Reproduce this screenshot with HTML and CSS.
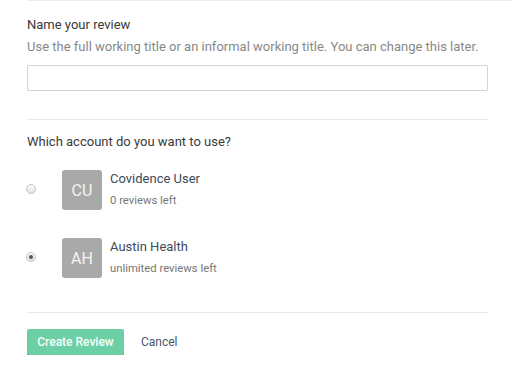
FILE: index.html
```html
<!DOCTYPE html>
<html>
<head>
    <link rel="stylesheet" href="styles.css">
</head>
<body>
    <div class="top-rule"></div>

    <div class="form">
        <div class="field">
            <label class="field-label" for="review-name">Name your review</label>
            <p class="field-help">Use the full working title or an informal working title. You can change this later.</p>
            <input id="review-name" class="text-input" type="text">
        </div>

        <div class="accounts">
            <p class="field-label">Which account do you want to use?</p>

            <div class="account">
                <span class="radio"></span>
                <div class="avatar">CU</div>
                <div class="account-info">
                    <div class="account-name">Covidence User</div>
                    <div class="account-meta">0 reviews left</div>
                </div>
            </div>

            <div class="account">
                <span class="radio checked"></span>
                <div class="avatar">AH</div>
                <div class="account-info">
                    <div class="account-name">Austin Health</div>
                    <div class="account-meta">unlimited reviews left</div>
                </div>
            </div>
        </div>

        <div class="actions">
            <button class="btn-create">Create Review</button>
            <a href="#" class="btn-cancel">Cancel</a>
        </div>
    </div>
</body>
</html>
```

FILE: styles.css
```css
* {
    margin: 0;
    padding: 0;
    box-sizing: border-box;
}

body {
    font-family: Roboto, "Liberation Sans", Arial, sans-serif;
    font-size: 13px;
    color: #333333;
    background: #ffffff;
}

.top-rule {
    margin-left: 27px;
    border-top: 1px solid #eeeeee;
}

.form {
    width: 461px;
    margin-left: 27px;
}

.field {
    padding-top: 14px;
    padding-bottom: 28px;
    border-bottom: 1px solid #e8e8e8;
}

.field-label {
    display: block;
    line-height: 20px;
    color: #3a3a3a;
}

.field-help {
    margin-top: 2px;
    line-height: 20px;
    color: #888888;
}

.text-input {
    display: block;
    width: 100%;
    height: 26px;
    margin-top: 8px;
    border: 1px solid #d4d4d4;
    border-radius: 1px;
    outline: none;
    font-family: inherit;
    font-size: 13px;
    padding: 0 8px;
}

.accounts {
    padding-top: 12px;
    padding-bottom: 34px;
    border-bottom: 1px solid #e8e8e8;
}

.accounts .field-label {
    margin-bottom: 18px;
}

.account {
    display: flex;
    align-items: flex-start;
    margin-bottom: 28px;
}

.account:last-child {
    margin-bottom: 0;
}

.radio {
    width: 10px;
    height: 10px;
    margin-top: 14px;
    margin-left: -1px;
    margin-right: 26px;
    border-radius: 50%;
    border: 1px solid #c4c4c4;
    background: linear-gradient(#fafafa, #e2e2e2);
    display: flex;
    justify-content: center;
    align-items: center;
}

.radio.checked::after {
    content: "";
    width: 4px;
    height: 4px;
    border-radius: 50%;
    background: #555555;
}

.avatar {
    width: 40px;
    height: 40px;
    border-radius: 3px;
    background: #a9a9a9;
    color: #f4f4f4;
    font-size: 16px;
    display: flex;
    justify-content: center;
    align-items: center;
    margin-right: 8px;
}

.account-name {
    font-size: 13px;
    line-height: 18px;
    color: #3d4a5b;
}

.account-meta {
    font-size: 11.3px;
    line-height: 14px;
    color: #777777;
    margin-top: 6px;
}

.actions {
    display: flex;
    align-items: center;
    padding-top: 16px;
}

.btn-create {
    width: 97px;
    height: 26px;
    border: none;
    border-radius: 2px;
    background: #6ccfa6;
    box-shadow: 0 2px 0 #50ad86;
    color: #f7fffb;
    font-family: inherit;
    font-size: 12px;
    font-weight: 500;
    cursor: pointer;
}

.btn-cancel {
    margin-left: 17px;
    font-size: 12px;
    color: #4a566b;
    text-decoration: none;
}
```
